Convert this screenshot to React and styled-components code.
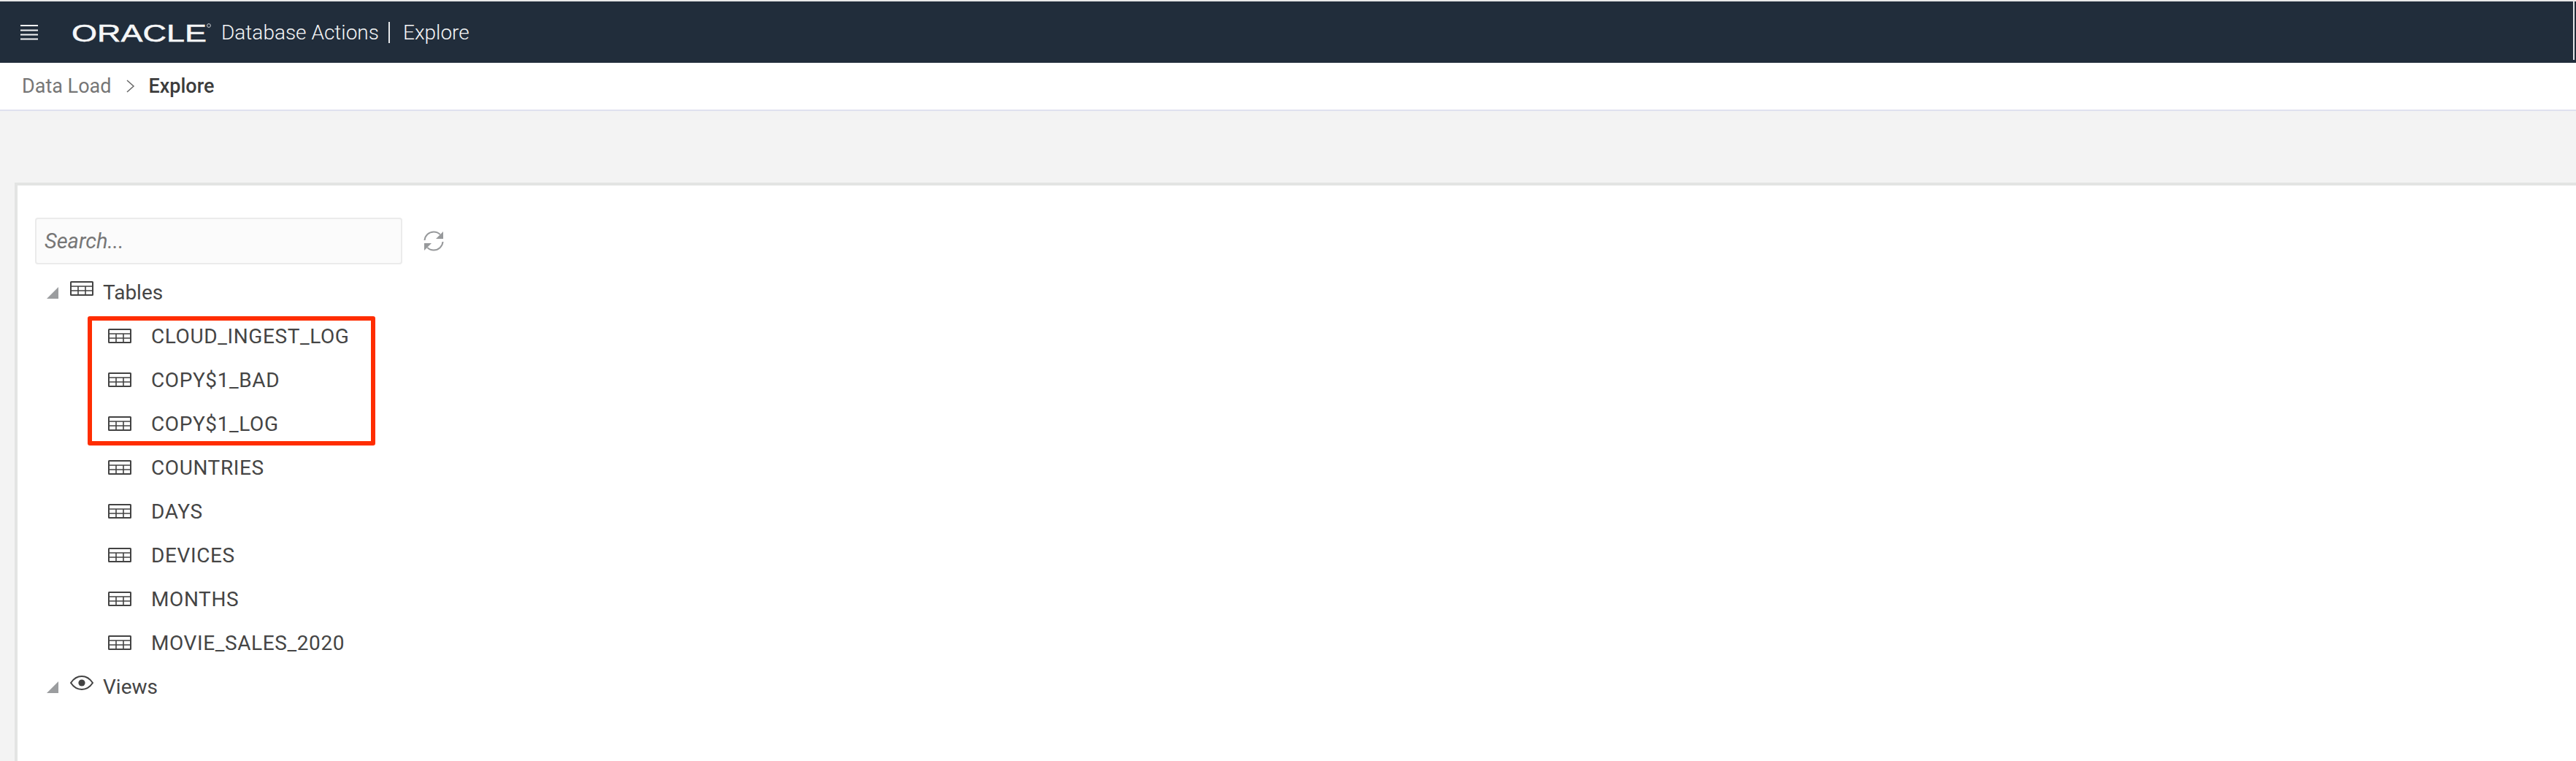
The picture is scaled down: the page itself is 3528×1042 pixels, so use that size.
import React from "react";
import styled, { createGlobalStyle } from "styled-components";

const Global = createGlobalStyle`
  html, body { margin: 0; padding: 0; height: 100%; background: #f3f3f3; overflow: hidden; }
  #root { height: 100%; }
  *, *::before, *::after { box-sizing: border-box; }
`;

const Page = styled.div`
  height: 100%;
  display: flex;
  flex-direction: column;
  padding-top: 2px;
  background: linear-gradient(#e8e8e8 2px, #f3f3f3 2px);
  font-family: Roboto, "Liberation Sans", Arial, sans-serif;
  color: #454545;
`;

const NavBar = styled.header`
  position: relative;
  height: 84px;
  flex: none;
  background: #212d3b;
  color: #f4f5f6;
  display: flex;
  align-items: center;
  padding-left: 28px;
  font-size: 28px;
  font-weight: 300;
`;

const ScrollEdge = styled.div`
  position: absolute;
  top: 0;
  right: 2px;
  width: 2px;
  height: 80px;
  background: #e4e6e8;
`;

const Burger = styled.svg`
  width: 24px;
  height: 22px;
  margin-right: 46px;
  flex: none;
`;

const Logo = styled.svg`
  width: 196px;
  height: 30px;
  flex: none;
  margin-right: 9px;
  overflow: visible;
`;

const AppName = styled.span`
  display: inline-block;
  width: 209px;
  white-space: nowrap;
`;

const Divider = styled.span`
  width: 2px;
  height: 29px;
  background: #e6e8ea;
  margin: 0 18px 0 20px;
`;

const Crumbs = styled.nav`
  height: 66px;
  flex: none;
  background: #fff;
  border-bottom: 2px solid #dfe1ef;
  display: flex;
  align-items: center;
  padding-left: 30px;
  font-size: 27px;
`;

const Crumb = styled.span`
  color: ${(p) => (p.$current ? "#3c3c3c" : "#767676")};
  font-weight: ${(p) => (p.$current ? 500 : 400)};
`;

const CrumbArrow = styled.svg`
  width: 12px;
  height: 18px;
  margin: 0 18px 0 21px;
  flex: none;
`;

const Band = styled.div`
  height: 98px;
  flex: none;
`;

const Panel = styled.main`
  flex: 1;
  margin-left: 20px;
  background: #fff;
  border-top: 4px solid #e3e4e3;
  border-left: 4px solid #e3e4e3;
  padding: 44px 0 0 24px;
`;

const SearchRow = styled.div`
  display: flex;
  align-items: center;
`;

const SearchBox = styled.div`
  width: 503px;
  height: 64px;
  background: #fbfbfb;
  border: 2px solid #ebebeb;
  border-radius: 4px;
  padding-left: 11px;
  display: flex;
  align-items: center;
  font-size: 29px;
  font-style: italic;
  color: #767676;
`;

const RefreshIcon = styled.svg`
  width: 30px;
  height: 30px;
  margin-left: 28px;
  flex: none;
`;

const Tree = styled.div`
  margin-top: 8px;
`;

const Row = styled.div`
  height: 60px;
  display: flex;
  align-items: center;
  font-size: 28px;
  letter-spacing: ${(p) => (p.$child ? "0.6px" : "0")};
  padding-left: ${(p) => (p.$child ? "100px" : "16px")};
  white-space: nowrap;
`;

const Caret = styled.svg`
  width: 16px;
  height: 16px;
  margin: 2px 16px 0 0;
  flex: none;
`;

const ParentIcon = styled.svg`
  width: 32px;
  height: 20px;
  margin: 0 13px 11px 0;
  flex: none;
`;

const ChildIcon = styled.svg`
  width: 32px;
  height: 20px;
  margin-right: 27px;
  flex: none;
`;

const Label = styled.span`
  display: inline-block;
`;

const Highlight = styled.div`
  position: relative;
  &::after {
    content: "";
    position: absolute;
    top: 3px;
    left: 72px;
    width: 394px;
    height: 177px;
    border: 6px solid #ff2d00;
    border-radius: 3px;
    pointer-events: none;
  }
`;

const TableGlyph = ({ as: Comp }) => (
  <Comp viewBox="0 0 32 20" fill="none" stroke="#434343" strokeWidth="2">
    <rect x="1" y="1" width="30" height="18" rx="0.5" />
    <path d="M1 7h30M1 13h30M11 7v12M21 7v12" strokeWidth="1.6" />
  </Comp>
);

const tables = ["COUNTRIES", "DAYS", "DEVICES", "MONTHS", "MOVIE_SALES_2020"];
const marked = ["CLOUD_INGEST_LOG", "COPY$1_BAD", "COPY$1_LOG"];

const CaretGlyph = () => (
  <Caret viewBox="0 0 16 16">
    <polygon points="16,0 16,16 0,16" fill="#9b9d9f" />
  </Caret>
);

const TableRow = ({ name }) => (
  <Row $child>
    <TableGlyph as={ChildIcon} />
    <Label>{name}</Label>
  </Row>
);

export default function App() {
  return (
    <Page>
      <Global />
      <NavBar>
        <Burger viewBox="0 0 24 22" stroke="#f4f5f6" strokeWidth="2">
          <path d="M0 2h24M0 8.500h24M0 14.500h24M0 20.500h24" />
        </Burger>
        <Logo viewBox="0 0 196 30">
          <text
            x="0"
            y="28"
            fill="#f6f7f8"
            stroke="#f6f7f8"
            strokeWidth="0.5"
            fontFamily="Liberation Sans, Arial, sans-serif"
            fontSize="33"
            textLength="185"
            lengthAdjust="spacingAndGlyphs"
          >
            ORACLE
          </text>
          <circle cx="188" cy="6" r="2.4" fill="none" stroke="#c9ccd0" strokeWidth="1" />
        </Logo>
        <AppName>Database Actions</AppName>
        <Divider />
        <span>Explore</span>
        <ScrollEdge />
      </NavBar>
      <Crumbs>
        <Crumb>Data Load</Crumb>
        <CrumbArrow viewBox="0 0 12 18" fill="none" stroke="#666" strokeWidth="1.5">
          <path d="M1 1l9 8-9 8" />
        </CrumbArrow>
        <Crumb $current>Explore</Crumb>
      </Crumbs>
      <Band />
      <Panel>
        <SearchRow>
          <SearchBox>Search...</SearchBox>
          <RefreshIcon viewBox="0 0 30 30" fill="none" stroke="#97999b" strokeWidth="2">
            <path d="M2.500 14C3 7.500 8.500 2.500 15 2.500c3.500 0 6.500 1.300 8.700 3.600" />
            <path d="M27.500 16c-.5 6.500-6 11.500-12.500 11.500-3.500 0-6.500-1.300-8.700-3.600" />
            <polygon points="28,2 28,12 18,12" fill="#97999b" stroke="none" />
            <polygon points="2,28 2,18 12,18" fill="#97999b" stroke="none" />
          </RefreshIcon>
        </SearchRow>
        <Tree>
          <Row>
            <CaretGlyph />
            <TableGlyph as={ParentIcon} />
            <Label>Tables</Label>
          </Row>
          <Highlight>
            {marked.map((n) => (
              <TableRow key={n} name={n} />
            ))}
          </Highlight>
          {tables.map((n) => (
            <TableRow key={n} name={n} />
          ))}
          <Row>
            <CaretGlyph />
            <ParentIcon viewBox="0 0 32 20" fill="none" stroke="#434343" strokeWidth="2">
              <path d="M1 10C5 4 10 1 16 1s11 3 15 9c-4 6-9 9-15 9S5 16 1 10z" />
              <circle cx="16" cy="10" r="4.600" fill="#434343" stroke="none" />
            </ParentIcon>
            <Label>Views</Label>
          </Row>
        </Tree>
      </Panel>
    </Page>
  );
}
